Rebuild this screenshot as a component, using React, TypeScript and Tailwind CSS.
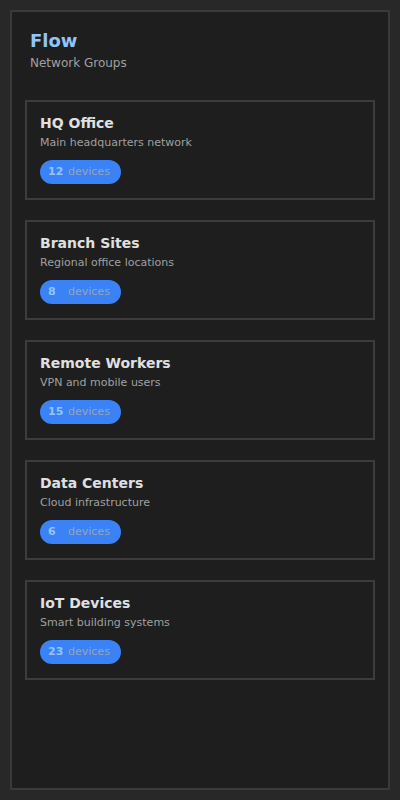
const groups = [
  { name: "HQ Office", desc: "Main headquarters network", count: 12 },
  { name: "Branch Sites", desc: "Regional office locations", count: 8 },
  { name: "Remote Workers", desc: "VPN and mobile users", count: 15 },
  { name: "Data Centers", desc: "Cloud infrastructure", count: 6 },
  { name: "IoT Devices", desc: "Smart building systems", count: 23 },
];

function GroupCard({ name, desc, count }: { name: string; desc: string; count: number }) {
  return (
    <div className="flex h-[100px] flex-col border-2 border-[#3c3c3c] bg-[#1e1e1e] px-[13px] pt-3">
      <h3 className="text-[14px] font-bold leading-[18px] text-[#e0e0e0]">{name}</h3>
      <p className="mt-[3px] text-[11px] leading-[16px] text-[#a0a0a0]">{desc}</p>
      <span className="mt-[9px] flex h-6 w-[81px] items-center rounded-full bg-[#3b82f6] pl-2 text-[11px]">
        <span className="w-5 font-bold text-[#93c5fd]">{count}</span>
        <span className="text-[#9ca3af]">devices</span>
      </span>
    </div>
  );
}

export default function App() {
  return (
    <div className="h-[800px] w-[400px] bg-[#282828] p-[10px] font-['DejaVu_Sans',sans-serif]">
      <div className="flex h-[780px] flex-col border-2 border-[#3a3a3a] bg-[#1e1e1e] px-[13px] pt-[18px]">
        <header className="px-[5px]">
          <h1 className="text-[18px] font-bold leading-[22px] text-[#90c4fb]">Flow</h1>
          <p className="mt-[3px] text-[12px] leading-[16px] text-[#a0a0a0]">Network Groups</p>
        </header>
        <div className="mt-[29px] flex flex-col gap-5">
          {groups.map((g) => (
            <GroupCard key={g.name} {...g} />
          ))}
        </div>
      </div>
    </div>
  );
}
